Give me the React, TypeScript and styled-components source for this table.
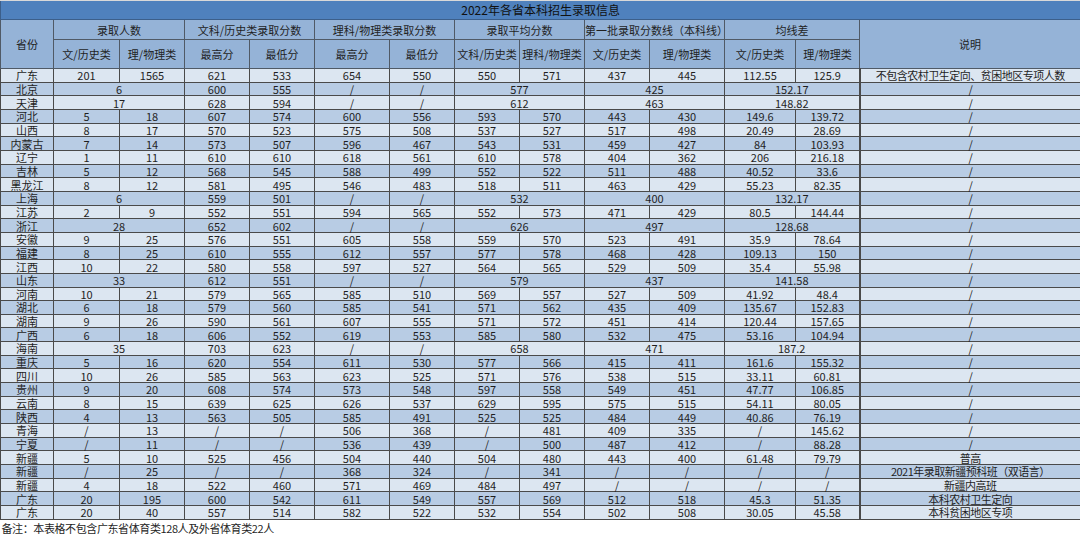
import React, { FC } from 'react';
import styled, { createGlobalStyle } from 'styled-components';

type CellValue = string | { v: string; span: number };

const GlobalStyle = createGlobalStyle`
  html, body {
    margin: 0;
    padding: 0;
    background: #ffffff;
  }
  body {
    font-family: "Noto Sans CJK SC", "Noto Sans", sans-serif;
    color: #1f1f1f;
  }
`;

const Sheet = styled.table`
  width: 1080px;
  table-layout: fixed;
  border-collapse: collapse;
  font-size: 11px;
  line-height: 12px;
`;

const TitleCell = styled.th`
  height: 18px;
  padding: 0;
  background: #4f81bd;
  border: 1px solid #3c5f8a;
  border-top: 1px solid #d9d9d9;
  font-size: 12px;
  line-height: 14px;
  font-weight: normal;
  color: #111;
  text-align: center;
`;

const HeadRow = styled.tr<{ $h: number }>`
  height: ${(p) => p.$h}px;
`;

const HeadCell = styled.th`
  padding: 0;
  background: #95b3d7;
  border: 1px solid #505a66;
  font-weight: normal;
  font-size: 11px;
  color: #1f1f1f;
  text-align: center;
  white-space: nowrap;
`;

const Row = styled.tr<{ $alt: boolean }>`
  height: 13.67px;
  background: ${(p) => (p.$alt ? '#b8cce4' : '#dce6f1')};
`;

const Cell = styled.td<{ $note?: boolean }>`
  padding: 0;
  border: 1px solid #4a4a4a;
  border-left-width: ${(p) => (p.$note ? '2px' : '1px')};
  text-align: center;
  white-space: nowrap;
  letter-spacing: ${(p) => (p.$note ? '-0.5px' : '0')};
`;

const FootCell = styled.td`
  padding: 2px 0 0 1px;
  background: #ffffff;
  text-align: left;
  white-space: nowrap;
  letter-spacing: -0.4px;
`;

const colWidths = [53, 66, 65, 65, 65, 75, 65, 65, 65, 65, 75, 71, 64, 221];

const m = (v: string): CellValue => ({ v, span: 2 });
const r = (s: string): CellValue[] => s.split(' ');

// 每行: 省份, 录取人数(文/理), 文科最高/最低, 理科最高/最低, 平均(文/理), 本科线(文/理), 均线差(文/理), 说明
const rows: CellValue[][] = [
  [...r('广东 201 1565 621 533 654 550 550 571 437 445 112.55 125.9'), '不包含农村卫生定向、贫困地区专项人数'],
  ['北京', m('6'), '600', '555', '/', '/', m('577'), m('425'), m('152.17'), '/'],
  ['天津', m('17'), '628', '594', '/', '/', m('612'), m('463'), m('148.82'), '/'],
  r('河北 5 18 607 574 600 556 593 570 443 430 149.6 139.72 /'),
  r('山西 8 17 570 523 575 508 537 527 517 498 20.49 28.69 /'),
  r('内蒙古 7 14 573 507 596 467 543 531 459 427 84 103.93 /'),
  r('辽宁 1 11 610 610 618 561 610 578 404 362 206 216.18 /'),
  r('吉林 5 12 568 545 588 499 552 522 511 488 40.52 33.6 /'),
  r('黑龙江 8 12 581 495 546 483 518 511 463 429 55.23 82.35 /'),
  ['上海', m('6'), '559', '501', '/', '/', m('532'), m('400'), m('132.17'), '/'],
  r('江苏 2 9 552 551 594 565 552 573 471 429 80.5 144.44 /'),
  ['浙江', m('28'), '652', '602', '/', '/', m('626'), m('497'), m('128.68'), '/'],
  r('安徽 9 25 576 551 605 558 559 570 523 491 35.9 78.64 /'),
  r('福建 8 25 610 555 612 557 577 578 468 428 109.13 150 /'),
  r('江西 10 22 580 558 597 527 564 565 529 509 35.4 55.98 /'),
  ['山东', m('33'), '612', '551', '/', '/', m('579'), m('437'), m('141.58'), '/'],
  r('河南 10 21 579 565 585 510 569 557 527 509 41.92 48.4 /'),
  r('湖北 6 18 579 560 585 541 571 562 435 409 135.67 152.83 /'),
  r('湖南 9 26 590 561 607 555 571 572 451 414 120.44 157.65 /'),
  r('广西 6 18 606 552 619 553 585 580 532 475 53.16 104.94 /'),
  ['海南', m('35'), '703', '623', '/', '/', m('658'), m('471'), m('187.2'), '/'],
  r('重庆 5 16 620 554 611 530 577 566 415 411 161.6 155.32 /'),
  r('四川 10 26 585 563 623 525 571 576 538 515 33.11 60.81 /'),
  r('贵州 9 20 608 574 573 548 597 558 549 451 47.77 106.85 /'),
  r('云南 8 15 639 625 626 537 629 595 575 515 54.11 80.05 /'),
  r('陕西 4 13 563 505 585 491 525 525 484 449 40.86 76.19 /'),
  r('青海 / 13 / / 506 368 / 481 409 335 / 145.62 /'),
  r('宁夏 / 11 / / 536 439 / 500 487 412 / 88.28 /'),
  r('新疆 5 10 525 456 504 440 504 480 443 400 61.48 79.79 普高'),
  r('新疆 / 25 / / 368 324 / 341 / / / / 2021年录取新疆预科班（双语言）'),
  r('新疆 4 18 522 460 571 469 484 497 / / / / 新疆内高班'),
  r('广东 20 195 600 542 611 549 557 569 512 518 45.3 51.35 本科农村卫生定向'),
  r('广东 20 40 557 514 582 522 532 554 502 508 30.05 45.58 本科贫困地区专项'),
];

const groups = [
  '录取人数',
  '文科/历史类录取分数',
  '理科/物理类录取分数',
  '录取平均分数',
  '第一批录取分数线（本科线）',
  '均线差',
];

const subHeads = [
  '文/历史类',
  '理/物理类',
  '最高分',
  '最低分',
  '最高分',
  '最低分',
  '文科/历史类',
  '理科/物理类',
  '文/历史类',
  '理/物理类',
  '文/历史类',
  '理/物理类',
];

const DataRow: FC<{ cells: CellValue[]; alt: boolean }> = ({ cells, alt }) => (
  <Row $alt={alt}>
    {cells.map((c, i) => {
      const last = i === cells.length - 1;
      if (typeof c === 'string') {
        return (
          <Cell key={i} $note={last}>
            {c}
          </Cell>
        );
      }
      return (
        <Cell key={i} colSpan={c.span}>
          {c.v}
        </Cell>
      );
    })}
  </Row>
);

const App: FC = () => (
  <>
    <GlobalStyle />
    <Sheet>
      <colgroup>
        {colWidths.map((w, i) => (
          <col key={i} style={{ width: w }} />
        ))}
      </colgroup>
      <thead>
        <tr>
          <TitleCell colSpan={14}>2022年各省本科招生录取信息</TitleCell>
        </tr>
        <HeadRow $h={20}>
          <HeadCell rowSpan={2}>省份</HeadCell>
          {groups.map((g) => (
            <HeadCell key={g} colSpan={2}>
              {g}
            </HeadCell>
          ))}
          <HeadCell rowSpan={2}>说明</HeadCell>
        </HeadRow>
        <HeadRow $h={29}>
          {subHeads.map((s, i) => (
            <HeadCell key={i}>{s}</HeadCell>
          ))}
        </HeadRow>
      </thead>
      <tbody>
        {rows.map((cells, i) => (
          <DataRow key={i} cells={cells} alt={i % 2 === 1} />
        ))}
        <tr>
          <FootCell colSpan={14}>备注：本表格不包含广东省体育类128人及外省体育类22人</FootCell>
        </tr>
      </tbody>
    </Sheet>
  </>
);

export default App;
